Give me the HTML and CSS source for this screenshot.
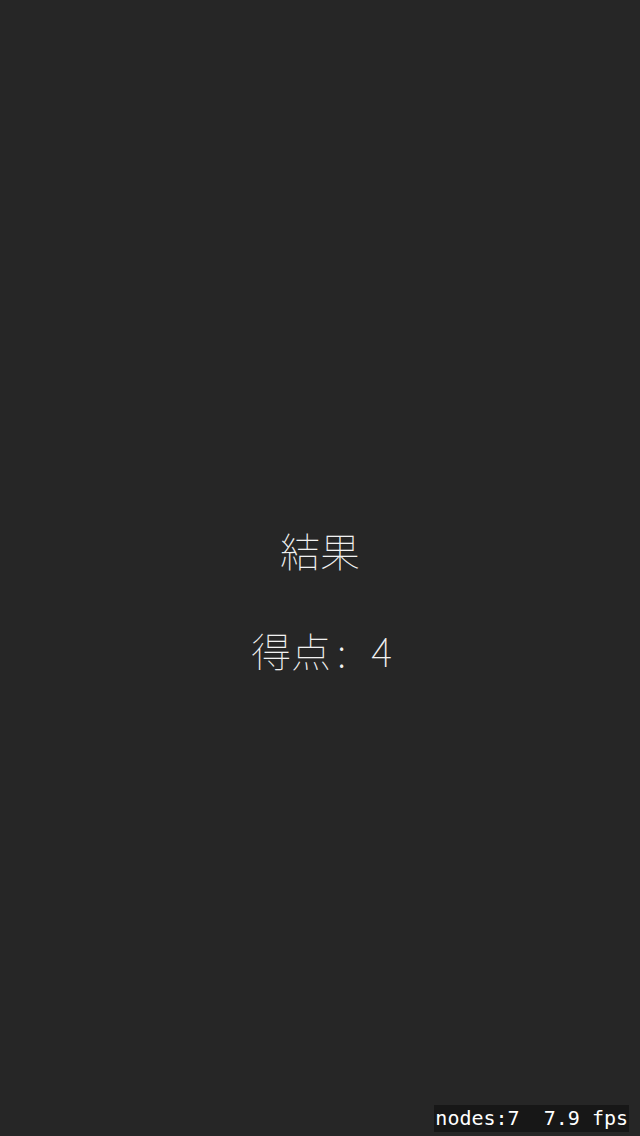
FILE: index.html
```html
<!DOCTYPE html>
<html lang="ja">
<head>
<meta charset="utf-8">
<link rel="stylesheet" href="styles.css">
</head>
<body>
<main class="scene">
  <div class="labels">
    <div class="title">結果</div>
    <div class="score"><span class="score-label">得点</span><span class="score-colon">:</span><span class="score-value">4</span></div>
  </div>
  <div class="stats">nodes:7&nbsp;&nbsp;7.9 fps</div>
</main>
</body>
</html>
```
FILE: styles.css
```css
html, body {
  margin: 0;
  padding: 0;
  background: #262626;
}
.scene {
  position: relative;
  width: 640px;
  height: 1136px;
  overflow: hidden;
  background: #262626;
}
.labels {
  display: flex;
  flex-direction: column;
  align-items: center;
  padding-top: 530px;
  gap: 60px;
  color: #f2f2f2;
  font-family: "Noto Sans CJK JP", sans-serif;
  font-weight: 100;
  font-size: 40px;
  line-height: 40px;
}
.title, .score {
  white-space: pre;
}
.score {
  padding-left: 3px;
}
.score-colon {
  margin-left: 6px;
}
.score-value {
  margin-left: 25px;
}
.stats {
  position: absolute;
  right: 11px;
  bottom: 4px;
  background: #171717;
  color: #ffffff;
  font-family: "DejaVu Sans Mono", monospace;
  font-size: 20px;
  line-height: 27px;
  padding: 0 1px 0 1px;
}
```
